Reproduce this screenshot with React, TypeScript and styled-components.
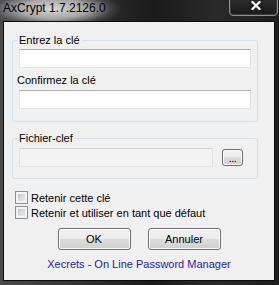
import styled, { createGlobalStyle, css } from "styled-components";

const GlobalStyle = createGlobalStyle`
  html, body {
    margin: 0;
    padding: 0;
    background: #1c1c1c;
  }
  body {
    font-family: "Liberation Sans", Arial, sans-serif;
  }
`;

const Window = styled.div`
  display: flex;
  flex-direction: column;
  width: 279px;
  height: 285px;
  overflow: hidden;
  background: linear-gradient(to right, #4a4a4a 0%, #2a2a2a 38%, #1b1b1b 55%, #2a2a2a 78%, #1e1e1e 100%);
`;

const TitleBar = styled.div`
  display: flex;
  justify-content: space-between;
  align-items: flex-start;
  height: 21px;
  flex-shrink: 0;
`;

const TitleGlow = styled.span`
  padding: 0 18px 4px 3px;
  line-height: 17px;
  font-size: 12px;
  color: #000;
  white-space: nowrap;
  background: radial-gradient(
    ellipse 68px 19px at 54px 9px,
    rgba(222, 222, 222, 0.95) 0%,
    rgba(195, 195, 195, 0.8) 50%,
    rgba(110, 110, 110, 0.3) 85%,
    rgba(60, 60, 60, 0) 100%
  );
`;

const CloseButton = styled.div`
  display: flex;
  justify-content: center;
  align-items: flex-start;
  box-sizing: border-box;
  width: 49px;
  height: 21px;
  margin: -5px 1px 0 0;
  padding: 5px 0 0 4px;
  border: 1px solid #8d8d8d;
  border-radius: 0 0 4px 4px;
  box-shadow: inset 0 0 0 1px #3c3c3c;
  background: linear-gradient(#2e2e2e, #1a1a1a);
`;

const Client = styled.div`
  flex: 1;
  display: flex;
  flex-direction: column;
  margin: 0 4px 4px 3px;
  border: 1px solid #0c0c0c;
  background: #f0f0f0;
  font-size: 11px;
  color: #000;
`;

const GroupBox = styled.fieldset<{ $top: number; $padTop: number; $padBottom: number }>`
  margin: ${(p) => p.$top}px 16px 0 8px;
  padding: ${(p) => p.$padTop}px 6px ${(p) => p.$padBottom}px 6px;
  border: 1px solid #d5dfe5;
  border-radius: 3px;
  min-inline-size: 0;
`;

const Caption = styled.legend`
  padding: 0 2px;
  margin-left: -2px;
  line-height: 13px;
`;

const FieldLabel = styled.label`
  display: block;
  margin: 6px 0 3px -2px;
  line-height: 13px;
`;

const TextBox = styled.input`
  display: block;
  box-sizing: border-box;
  width: 100%;
  min-width: 0;
  height: 19px;
  margin: 0;
  padding: 0 3px;
  border: 1px solid;
  border-color: #abadb3 #dbdfe6 #e3e9ef #e2e3ea;
  background: #fff;
  outline: none;
  font: inherit;

  &:disabled {
    background: #f3f3f3;
    border-color: #d4d4d4 #e2e2e2 #e8e8e8 #e2e2e2;
  }
`;

const FileRow = styled.div`
  display: flex;
  align-items: center;
  gap: 9px;
  padding-right: 8px;
`;

const winButton = css`
  box-sizing: border-box;
  margin: 0;
  padding: 0;
  border: 1px solid #707070;
  border-radius: 3px;
  background: linear-gradient(#f2f2f2 0%, #ebebeb 49%, #dddddd 50%, #cfcfcf 100%);
  box-shadow: inset 0 0 0 1px #fbfbfb;
  font-family: inherit;
  font-size: 11px;
  color: #000;
`;

const BrowseButton = styled.button`
  ${winButton}
  flex-shrink: 0;
  width: 21px;
  height: 17px;
  line-height: 12px;
  letter-spacing: -0.5px;
`;

const CheckRow = styled.label<{ $top: number }>`
  display: flex;
  align-items: center;
  gap: 3px;
  height: 15px;
  margin-top: ${(p) => p.$top}px;
  padding-left: 11px;
`;

const CheckBox = styled.span`
  box-sizing: border-box;
  width: 13px;
  height: 13px;
  border: 1px solid #8e8f8f;
  box-shadow: inset 0 0 0 2px #f4f4f4;
  background: linear-gradient(135deg, #b8bcc1 0%, #dcdee0 55%, #f1f1f1 100%);
`;

const ButtonRow = styled.div`
  display: flex;
  justify-content: center;
  gap: 17px;
  margin-top: 8px;
`;

const PushButton = styled.button`
  ${winButton}
  width: 73px;
  height: 22px;
`;

const WebLink = styled.a`
  align-self: center;
  margin-top: 8px;
  line-height: 13px;
  color: #1e1ea8;
  text-decoration: none;
`;

const CloseGlyph = () => (
  <svg width="10" height="9" viewBox="0 0 10 9">
    <path d="M1.5 1 L8.5 8 M8.5 1 L1.5 8" stroke="#fff" strokeWidth="2.2" strokeLinecap="square" />
  </svg>
);

export default function App() {
  return (
    <>
      <GlobalStyle />
      <Window>
        <TitleBar>
          <TitleGlow>AxCrypt 1.7.2126.0</TitleGlow>
          <CloseButton>
            <CloseGlyph />
          </CloseButton>
        </TitleBar>
        <Client>
          <GroupBox $top={12} $padTop={2} $padBottom={12}>
            <Caption>Entrez la clé</Caption>
            <TextBox type="password" />
            <FieldLabel>Confirmez la clé</FieldLabel>
            <TextBox type="password" />
          </GroupBox>

          <GroupBox $top={10} $padTop={3} $padBottom={11}>
            <Caption>Fichier-clef</Caption>
            <FileRow>
              <TextBox disabled />
              <BrowseButton>...</BrowseButton>
            </FileRow>
          </GroupBox>

          <CheckRow $top={11}>
            <CheckBox />
            Retenir cette clé
          </CheckRow>
          <CheckRow $top={0}>
            <CheckBox />
            Retenir et utiliser en tant que défaut
          </CheckRow>

          <ButtonRow>
            <PushButton>OK</PushButton>
            <PushButton>Annuler</PushButton>
          </ButtonRow>

          <WebLink>Xecrets - On Line Password Manager</WebLink>
        </Client>
      </Window>
    </>
  );
}
